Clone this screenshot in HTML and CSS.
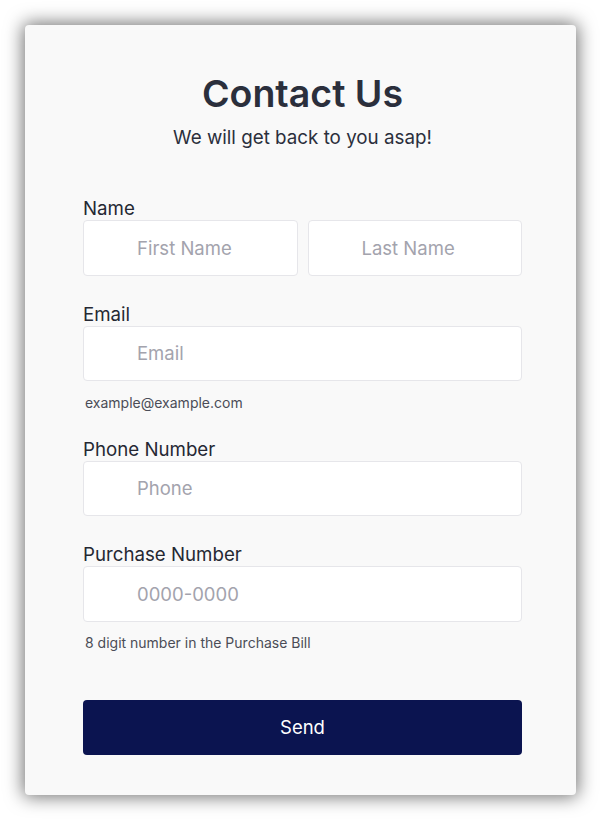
FILE: index.html
```html
<!DOCTYPE html>
<html lang="en">
<head>
<meta charset="utf-8">
<title>Contact Us</title>
<link rel="stylesheet" href="styles.css">
</head>
<body>
<main class="card">
  <h1 class="title">Contact Us</h1>
  <p class="subtitle">We will get back to you asap!</p>
  <form class="form">
    <div class="group">
      <label class="label">Name</label>
      <div class="row">
        <input class="input" type="text" placeholder="First Name">
        <input class="input" type="text" placeholder="Last Name">
      </div>
    </div>
    <div class="group">
      <label class="label">Email</label>
      <input class="input" type="email" placeholder="Email">
      <p class="help">example@example.com</p>
    </div>
    <div class="group">
      <label class="label">Phone Number</label>
      <input class="input" type="tel" placeholder="Phone">
    </div>
    <div class="group">
      <label class="label">Purchase Number</label>
      <input class="input" type="text" placeholder="0000-0000">
      <p class="help">8 digit number in the Purchase Bill</p>
    </div>
    <button class="send" type="button">Send</button>
  </form>
</main>
</body>
</html>
```

FILE: styles.css
```css
* { box-sizing: border-box; }
html, body { margin: 0; background: #ffffff; }
body {
  padding: 25px;
  font-family: Inter, "Liberation Sans", sans-serif;
  color: #222;
}
.card {
  width: 551px;
  height: 770px;
  background: #f9f9f9;
  border-radius: 4px;
  box-shadow: 0 0 18px 2px rgba(0, 0, 0, 0.55);
  padding: 47px 54px 40px 58px;
}
.title {
  margin: 0;
  text-align: center;
  font-size: 37.5px;
  line-height: 44px;
  font-weight: 600;
  color: #2b2f3c;
}
.subtitle {
  margin: 10px 0 0;
  text-align: center;
  font-size: 18.8px;
  line-height: 23px;
  color: #2b2f3c;
}
.form {
  margin-top: 48px;
  display: flex;
  flex-direction: column;
}
.group {
  display: flex;
  flex-direction: column;
  margin-bottom: 27px;
}
.label {
  font-size: 18.7px;
  line-height: 23px;
  color: #252833;
}
.row {
  display: flex;
  gap: 10px;
}
.row .input { flex: 1; min-width: 0; }
.input {
  height: 55.5px;
  width: 100%;
  border: 1px solid #e6e6ea;
  border-radius: 4px;
  background: #ffffff;
  padding: 0 12px 0 53px;
  font-family: Inter, "Liberation Sans", sans-serif;
  font-size: 18.5px;
  color: #222;
  outline: none;
}
.input::placeholder { color: #a3a3ad; }
.help {
  margin: 12.5px 0 0 2px;
  font-size: 14px;
  line-height: 17px;
  color: #4b4d57;
}
.group:last-of-type { margin-bottom: 48.5px; }
.send {
  height: 55px;
  width: 100%;
  border: none;
  border-radius: 4px;
  background: #0b1450;
  color: #ffffff;
  font-family: Inter, "Liberation Sans", sans-serif;
  font-size: 18.5px;
}
```
